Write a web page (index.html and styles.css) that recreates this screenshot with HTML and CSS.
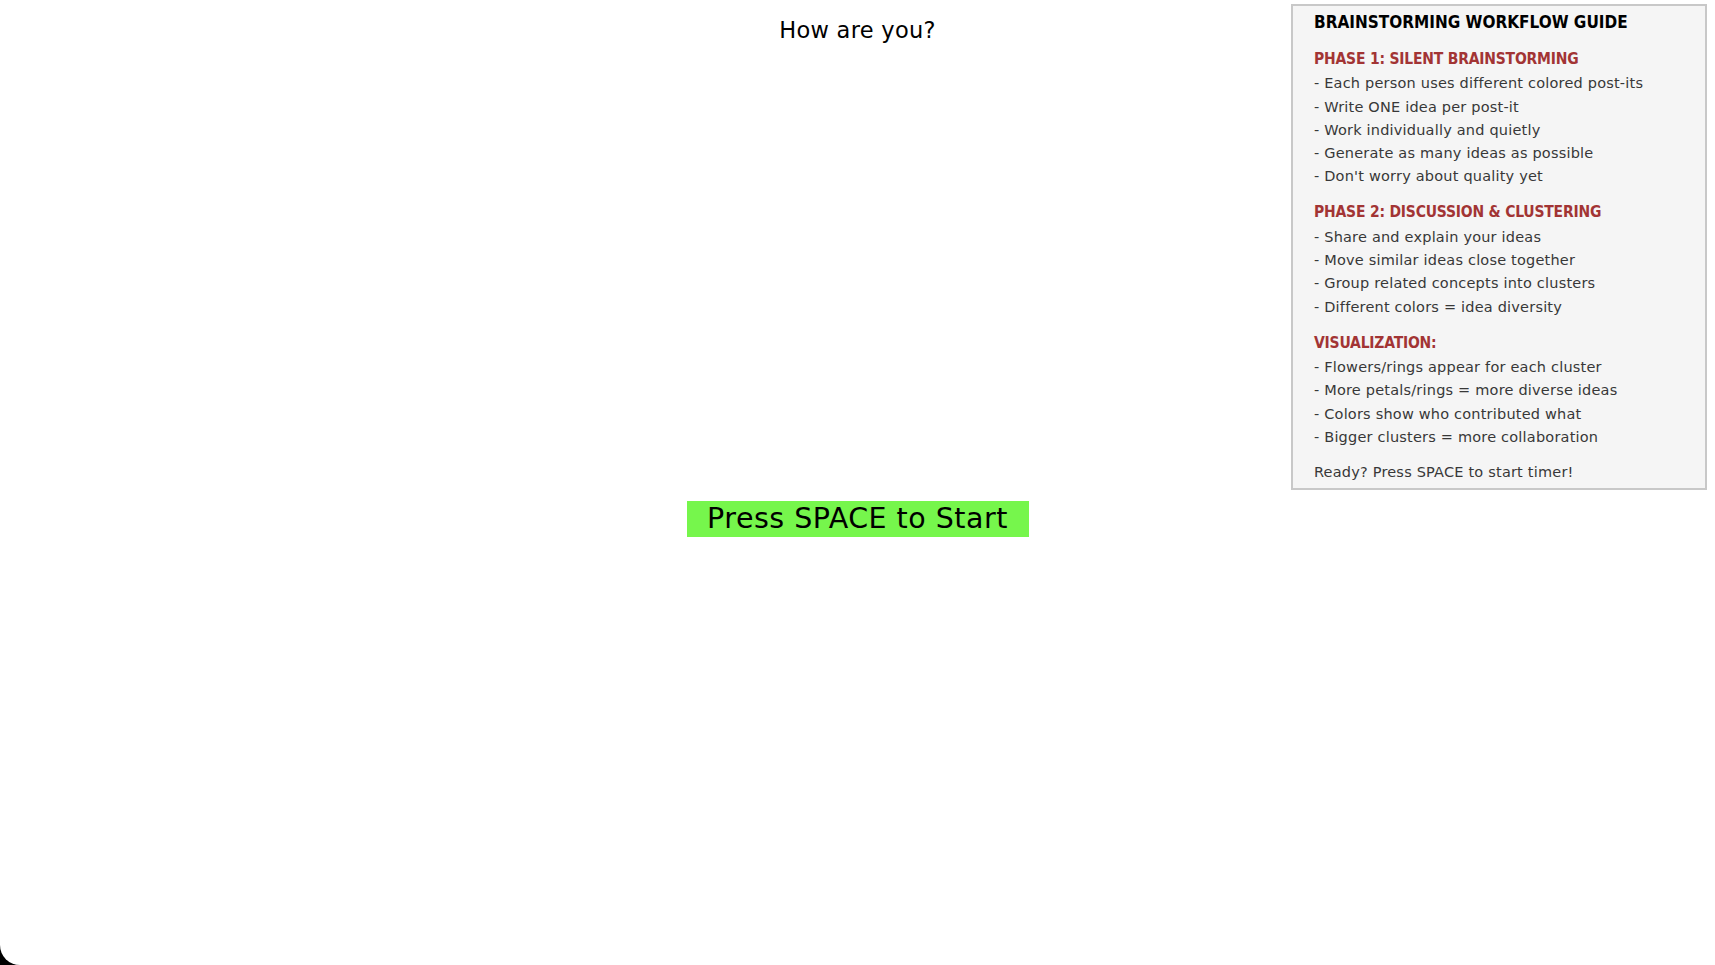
FILE: index.html
```html
<!DOCTYPE html>
<html lang="en">
<head>
<meta charset="utf-8">
<title>Brainstorming</title>
<link rel="stylesheet" href="styles.css">
</head>
<body>
<main class="stage">
  <h1 class="prompt">How are you?</h1>
  <div class="start">Press SPACE to Start</div>
</main>
<aside class="guide">
  <h2 class="guide-title">BRAINSTORMING WORKFLOW GUIDE</h2>
  <section class="phase">
    <h3 class="phase-title">PHASE 1: SILENT BRAINSTORMING</h3>
    <p class="item">- Each person uses different colored post-its</p>
    <p class="item">- Write ONE idea per post-it</p>
    <p class="item">- Work individually and quietly</p>
    <p class="item">- Generate as many ideas as possible</p>
    <p class="item">- Don't worry about quality yet</p>
  </section>
  <section class="phase">
    <h3 class="phase-title">PHASE 2: DISCUSSION &amp; CLUSTERING</h3>
    <p class="item">- Share and explain your ideas</p>
    <p class="item">- Move similar ideas close together</p>
    <p class="item">- Group related concepts into clusters</p>
    <p class="item">- Different colors = idea diversity</p>
  </section>
  <section class="phase">
    <h3 class="phase-title">VISUALIZATION:</h3>
    <p class="item">- Flowers/rings appear for each cluster</p>
    <p class="item">- More petals/rings = more diverse ideas</p>
    <p class="item">- Colors show who contributed what</p>
    <p class="item">- Bigger clusters = more collaboration</p>
  </section>
  <p class="item ready">Ready? Press SPACE to start timer!</p>
</aside>
</body>
</html>
```

FILE: styles.css
```css
html {
  background: #000;
  margin: 0;
  padding: 0;
}
body {
  margin: 0;
  width: 1715px;
  height: 965px;
  background: #fff;
  border-bottom-left-radius: 20px;
  overflow: hidden;
  position: relative;
  font-family: "DejaVu Sans", "Liberation Sans", sans-serif;
  color: #000;
}
.stage {
  display: flex;
  flex-direction: column;
  align-items: center;
  padding-top: 15px;
}
.prompt {
  margin: 0;
  font-size: 22.5px;
  font-weight: normal;
  line-height: 30px;
  letter-spacing: 0.3px;
}
.start {
  margin-top: 456px;
  width: 342px;
  height: 36px;
  line-height: 36px;
  background: #76f64c;
  text-align: center;
  font-size: 28.5px;
  letter-spacing: 0.5px;
  color: #000;
}
.guide {
  position: absolute;
  left: 1291px;
  top: 4px;
  width: 416px;
  height: 486px;
  box-sizing: border-box;
  border: 2px solid #c8c8c8;
  background: #f5f5f5;
  padding: 4px 0 0 21px;
}
.guide-title {
  margin: 0;
  font-family: "DejaVu Sans Condensed", "DejaVu Sans", sans-serif;
  font-stretch: condensed;
  font-size: 17px;
  font-weight: bold;
  line-height: 24px;
  color: #000;
}
.phase {
  margin-top: 13px;
}
.phase + .phase {
  margin-top: 11.7px;
}
.phase-title {
  margin: 0;
  font-family: "DejaVu Sans Condensed", "DejaVu Sans", sans-serif;
  font-stretch: condensed;
  font-size: 15.5px;
  font-weight: bold;
  line-height: 25.3px;
  letter-spacing: -0.2px;
  color: #a23434;
}
.item {
  margin: 0;
  font-size: 14.5px;
  line-height: 23.3px;
  letter-spacing: 0.2px;
  color: #383838;
}
.ready {
  margin-top: 12px;
}
```
